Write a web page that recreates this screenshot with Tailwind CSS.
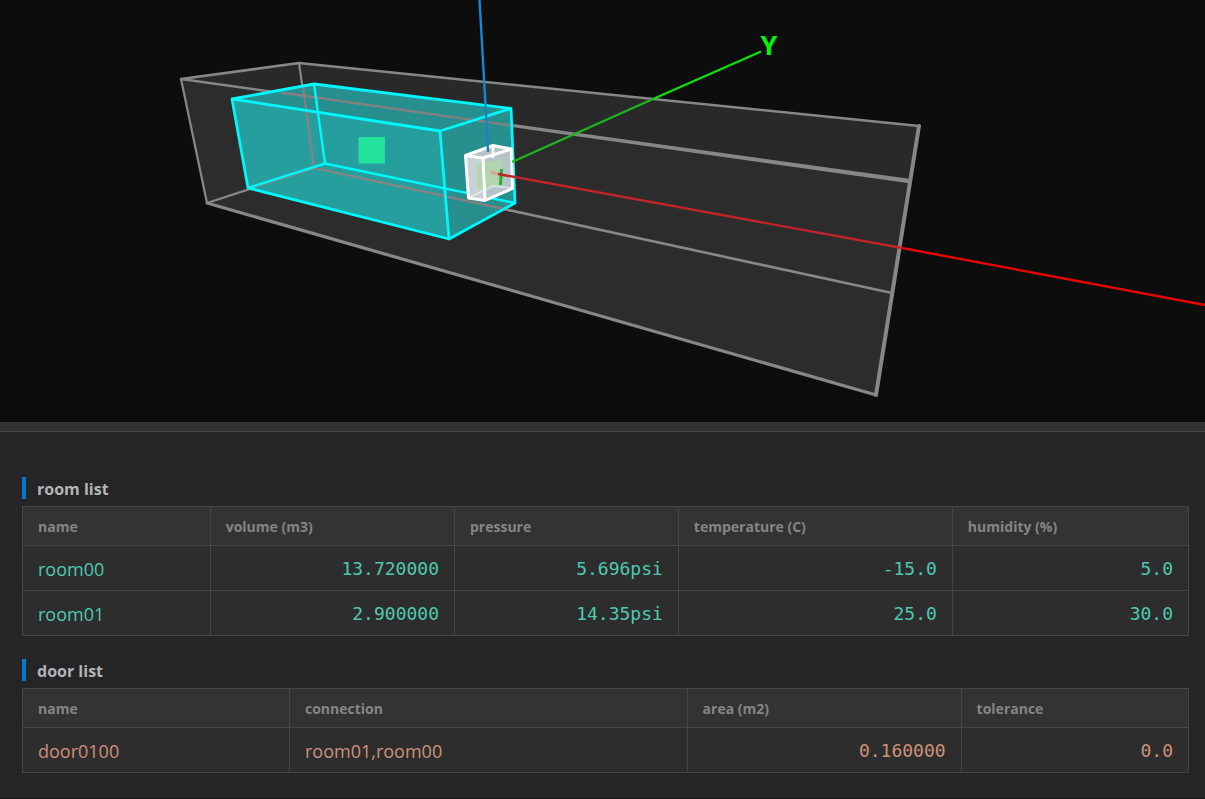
<!DOCTYPE html>
<html lang="en">
<head>
<meta charset="utf-8">
<meta name="viewport" content="width=device-width, initial-scale=1">
<title>Rooms and doors</title>
<script src="https://cdn.jsdelivr.net/npm/@tailwindcss/browser@4"></script>
</head>
<body class="flex min-h-screen flex-col bg-[#252527] font-['Open_Sans','Noto_Sans',sans-serif]">
<main class="flex grow flex-col border-b border-[#161616]">
  <section class="bg-[#0d0d0d]" aria-label="3D view">
    <svg class="block w-full" viewBox="0 0 1205 422" role="img" aria-label="Room model with axes">
      <!-- outer volume -->
      <path fill="#2c2c2c" d="M181 79L299 63L919 126L876 395L207 203Z"/>
      <path fill="#292929" d="M181 79L299 63L919 126L909 181Z"/>
      <g fill="none" stroke="#878787" stroke-width="2.4" stroke-linejoin="round" stroke-linecap="round">
        <path d="M181 79L299 63L919 126" stroke-width="2.6"/>
        <path d="M181 79L207 203L314 168L299 63" stroke-width="2.2"/>
        <path d="M314 168L892 293" stroke-width="2.6"/>
        <path d="M207 203L876 395" stroke-width="3.2"/>
        <path d="M919 126L876 395" stroke-width="4"/>
      </g>
      <path fill="#878787" d="M181 77.800L909 178.800L909 183.200L181 80.200Z"/>
      <!-- inner room -->
      <path fill="#269e9d" d="M232 99L314 84L511 108.500L515 203L449 239L248 188Z"/>
      <path fill="#278f8d" d="M232 99L314 84L511 108.500L440 131Z"/>
      <path fill="#278f8e" d="M440 131L511 108.500L515 203L449 239Z"/>
      <g fill="none" stroke="#a07c7c" stroke-opacity=".75" stroke-width="2.4">
        <path d="M281 92.500L511 125.500"/>
        <path d="M303 86L314 168L513 211M314 168L252 188"/>
      </g>
      <path fill="#23e29b" d="M358.500 137H385V163.500H358.500Z"/>
      <g fill="none" stroke="#00f7fb" stroke-width="2.8" stroke-linejoin="round">
        <path d="M232 99L314 84L511 108.500L440 131ZM232 99L248 188L449 239L515 203L511 108.500M440 131L449 239"/>
        <path d="M314 84L325 163.500L248 188M325 163.500L515 203" stroke-width="2.4"/>
      </g>
      <!-- door -->
      <path fill="#b4c4c8" d="M465.500 155.500L493 145.500L511.500 149L512.500 188.500L485 200.500L468.500 198Z"/>
      <path fill="#c8d2d4" d="M465.500 155.500L483 158L485 200.500L468.500 198Z"/>
      <path fill="#b2d8a8" fill-opacity=".85" d="M476.500 163L503 160V185L478 190Z"/>
      <path stroke="#32a932" stroke-width="3" d="M501.500 169L500.500 185"/>
      <g fill="none" stroke="#ffffff" stroke-width="3" stroke-linejoin="round">
        <path d="M465.500 155.500L493 145.500L511.500 149L512.500 188.500L485 200.500L468.500 198ZM465.500 155.500L483 158L511.500 149M483 158L485 200.500"/>
        <path d="M493 145.500V158" stroke-width="2.6"/>
        <path d="M470 197L493 186L511 188" stroke-width="1.8" stroke-opacity=".5"/>
      </g>
      <!-- axes -->
      <g fill="none" stroke-width="2.4">
        <path stroke="#1488d8" d="M479.500 0L485.500 105"/>
        <path stroke="#1c80c4" d="M485.500 105L488 152"/>
        <path stroke="#1db51d" d="M512 162L653 99"/>
        <path stroke="#0be00b" d="M653 99L761 51.500"/>
        <path stroke="#d6a58c" d="M490 172L498 174"/>
        <path stroke="#c02429" d="M498 174L902 248"/>
        <path stroke="#e60505" d="M902 248L1205 305"/>
      </g>
      <text x="769" y="55" text-anchor="middle" class="fill-[#08f008] text-[27px] font-bold">Y</text>
    </svg>
  </section>
  <div class="h-[10px] border-b border-[#454545] bg-[#333333]"></div>

  <div class="pt-[45px] pr-4 pb-6 pl-[22px]">
    <section>
      <h2 class="h-[22px] border-l-4 border-[#007acc] pl-[11px] text-base leading-6 font-bold text-[#b4b4b4]">room list</h2>
      <table class="mt-[7px] w-full table-fixed border-collapse bg-[#2d2d2d] text-[#4ec9b0] [&_td]:h-[45px] [&_td]:border [&_td]:border-[#454545] [&_td]:px-[15px] [&_td]:pt-0.5 [&_th]:h-[39px] [&_th]:border [&_th]:border-[#454545] [&_th]:px-[15px] [&_th]:pt-0.5">
        <colgroup><col class="w-[16.1%]"><col class="w-[20.95%]"><col class="w-[19.2%]"><col class="w-[23.5%]"><col></colgroup>
        <thead class="bg-[#333333] text-left text-sm text-[#858585]">
          <tr><th scope="col">name</th><th scope="col">volume (m3)</th><th scope="col">pressure</th><th scope="col">temperature (C)</th><th scope="col">humidity (%)</th></tr>
        </thead>
        <tbody class="text-right font-['DejaVu_Sans_Mono',monospace] text-lg">
          <tr><td class="text-left font-['Open_Sans',sans-serif]">room00</td><td>13.720000</td><td>5.696psi</td><td>-15.0</td><td>5.0</td></tr>
          <tr><td class="text-left font-['Open_Sans',sans-serif]">room01</td><td>2.900000</td><td>14.35psi</td><td>25.0</td><td>30.0</td></tr>
        </tbody>
      </table>
    </section>
    <section class="mt-[23px]">
      <h2 class="h-[22px] border-l-4 border-[#007acc] pl-[11px] text-base leading-6 font-bold text-[#b4b4b4]">door list</h2>
      <table class="mt-[7px] w-full table-fixed border-collapse bg-[#2d2d2d] text-[#ce9178] [&_td]:h-[45px] [&_td]:border [&_td]:border-[#454545] [&_td]:px-[15px] [&_td]:pt-0.5 [&_th]:h-[39px] [&_th]:border [&_th]:border-[#454545] [&_th]:px-[15px] [&_th]:pt-0.5">
        <colgroup><col class="w-[22.9%]"><col class="w-[34.1%]"><col class="w-[23.5%]"><col></colgroup>
        <thead class="bg-[#333333] text-left text-sm text-[#858585]">
          <tr><th scope="col">name</th><th scope="col">connection</th><th scope="col">area (m2)</th><th scope="col">tolerance</th></tr>
        </thead>
        <tbody class="text-right font-['DejaVu_Sans_Mono',monospace] text-lg">
          <tr><td class="text-left font-['Open_Sans',sans-serif]">door0100</td><td class="text-left font-['Open_Sans',sans-serif]">room01,room00</td><td>0.160000</td><td>0.0</td></tr>
        </tbody>
      </table>
    </section>
  </div>
</main>
</body>
</html>
